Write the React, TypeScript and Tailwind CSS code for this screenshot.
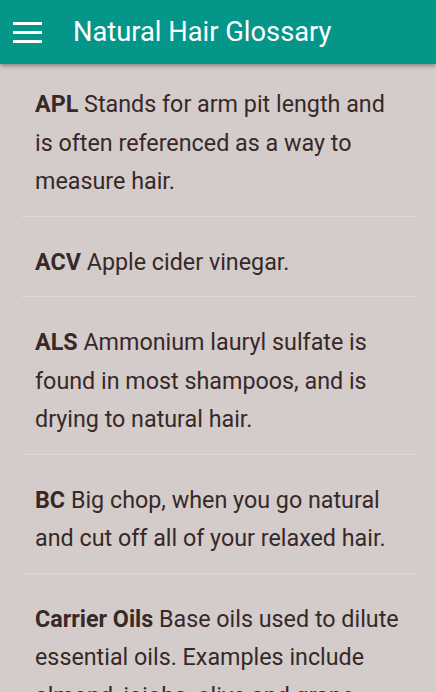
const terms = [
  { term: "APL", def: "Stands for arm pit length and is often referenced as a way to measure hair." },
  { term: "ACV", def: "Apple cider vinegar." },
  { term: "ALS", def: "Ammonium lauryl sulfate is found in most shampoos, and is drying to natural hair." },
  { term: "BC", def: "Big chop, when you go natural and cut off all of your relaxed hair." },
  {
    term: "Carrier Oils",
    def: "Base oils used to dilute essential oils. Examples include almond, jojoba, olive and grape seed oils.",
  },
];

const App = () => {
  return (
    <div className="h-[692px] overflow-hidden bg-[#d3cccb] font-['Roboto',sans-serif]">
      <header className="relative z-10 flex h-16 items-center bg-[#05968a] shadow-[0_2px_4px_rgba(0,0,0,0.35)]">
        <div className="flex w-[73px] pl-[13px]">
          <svg width="29" height="21" viewBox="0 0 29 21" fill="#ffffff">
            <rect x="0" y="0" width="29" height="3" />
            <rect x="0" y="9" width="29" height="3" />
            <rect x="0" y="18" width="29" height="3" />
          </svg>
        </div>
        <h1 className="text-[27.3px] font-normal text-white">Natural Hair Glossary</h1>
      </header>

      <ul className="mx-[21px] pt-[21px]">
        {terms.map((t, i) => (
          <li
            key={t.term}
            className={`px-[14px] pb-[15px] text-[23.3px] leading-[38.5px] text-[#382828] ${
              i === 0 ? "pt-0" : "border-t border-[#ddd7d6] pt-[26px]"
            }`}
          >
            <span className="font-bold">{t.term}</span> {t.def}
          </li>
        ))}
      </ul>
    </div>
  );
};

export default App;
